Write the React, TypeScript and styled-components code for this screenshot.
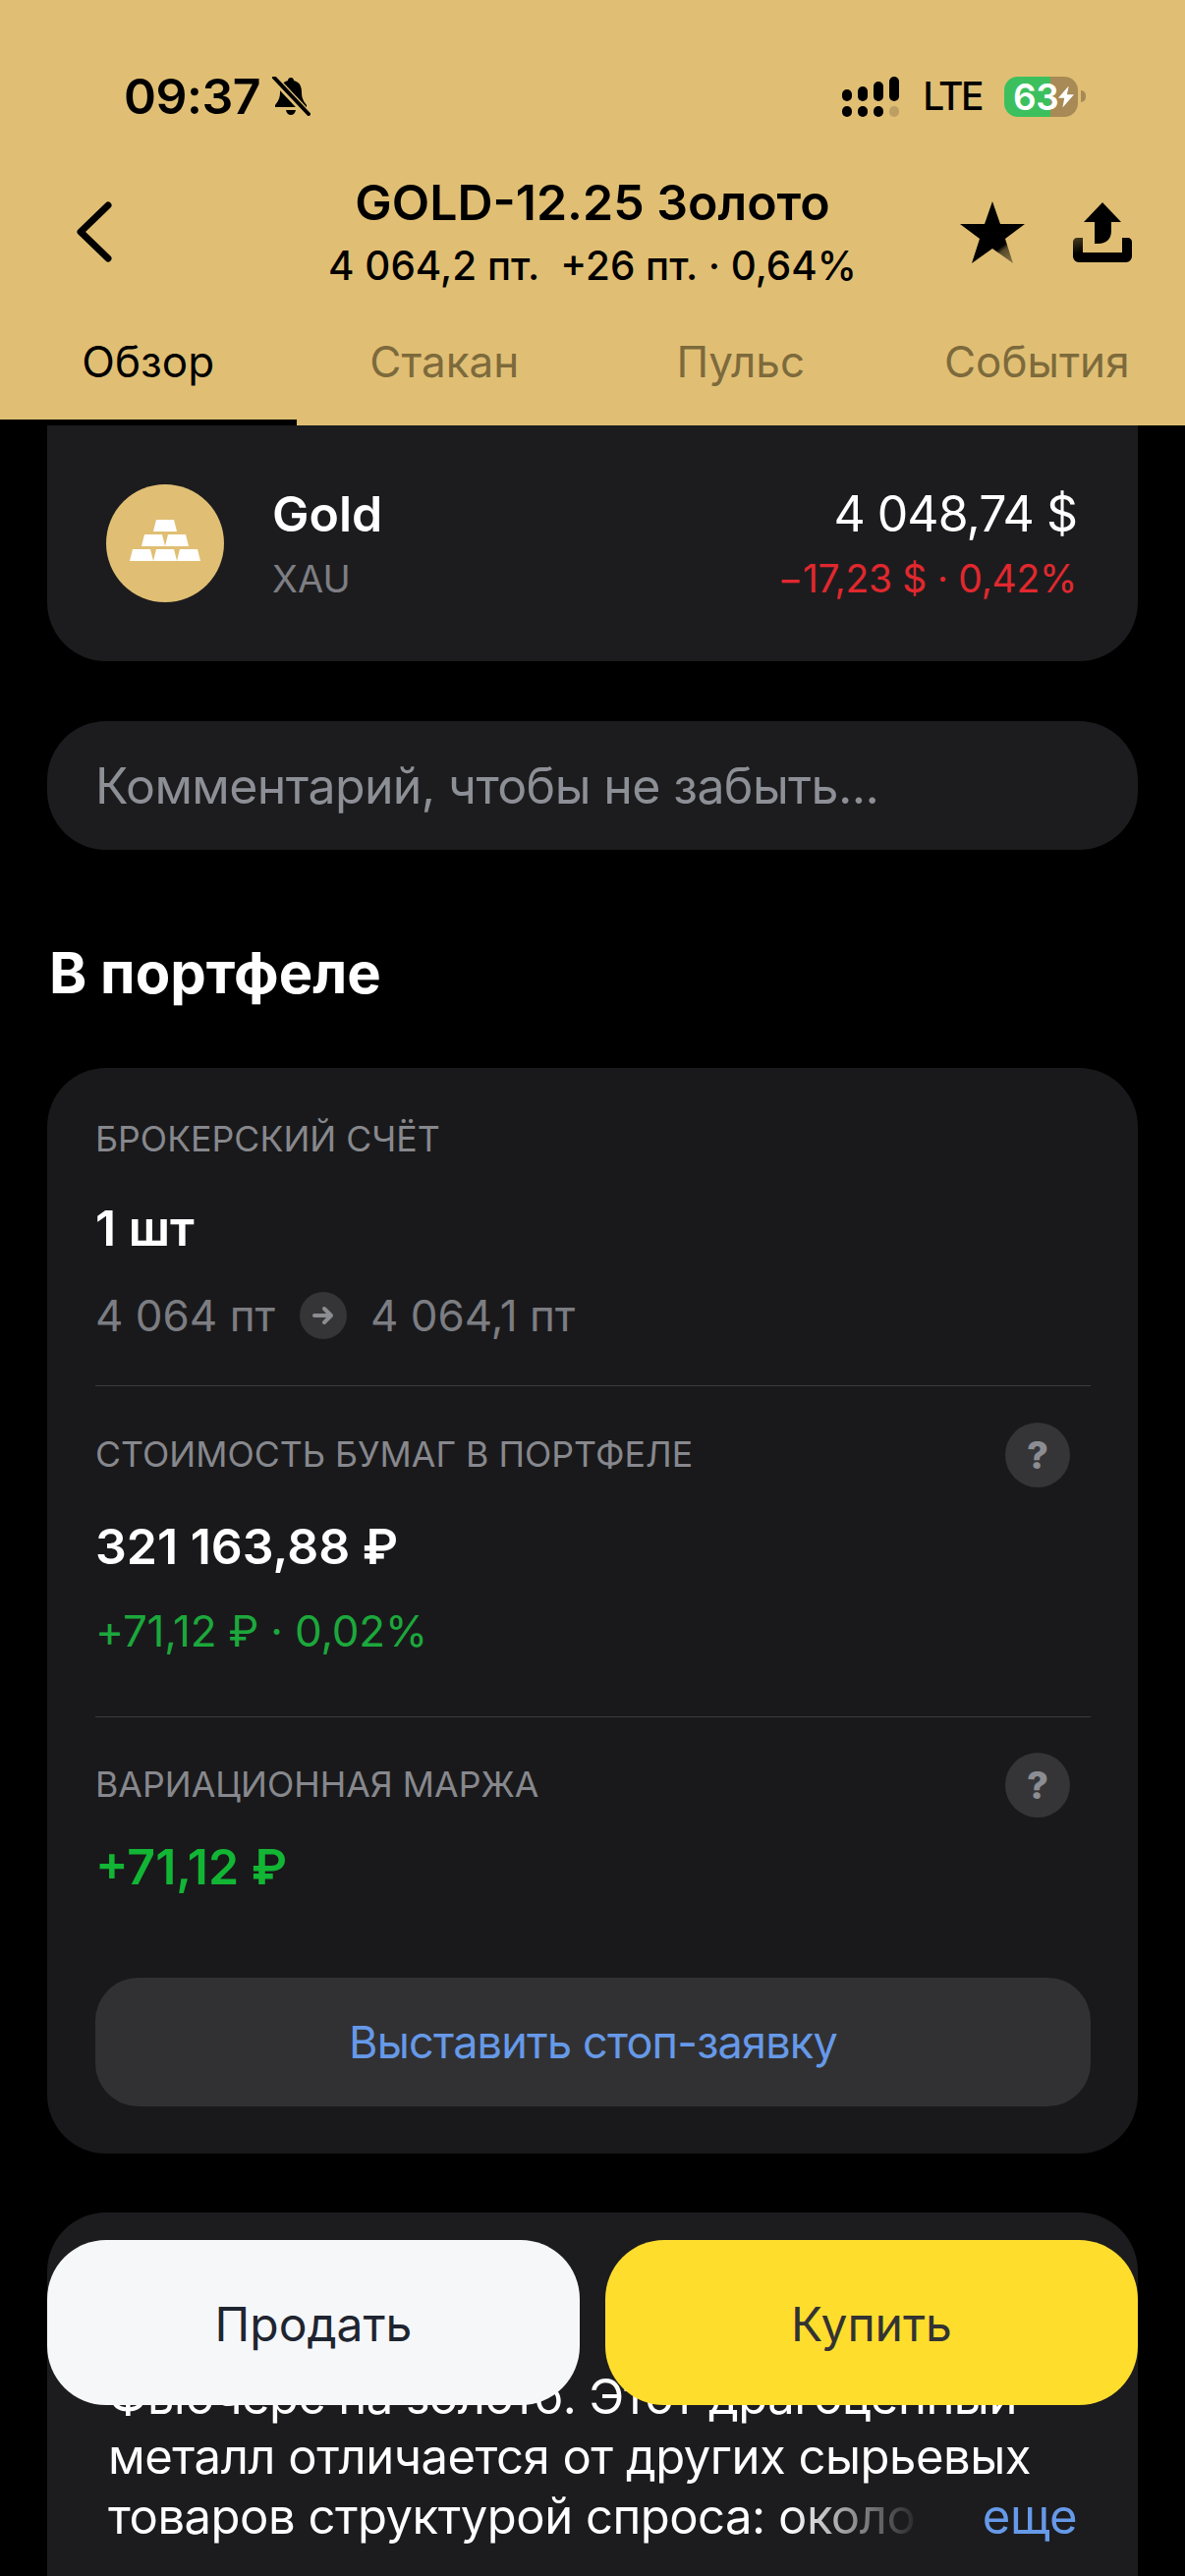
import styled, { createGlobalStyle } from 'styled-components'

const GlobalStyle = createGlobalStyle`
  html, body {
    margin: 0;
    padding: 0;
    background: #000;
  }
  * {
    box-sizing: border-box;
  }
`

const Screen = styled.div`
  position: relative;
  width: 1206px;
  height: 2622px;
  overflow: hidden;
  background: #000;
  font-family: Inter, 'Liberation Sans', sans-serif;
  color: #fff;
`

const Header = styled.header`
  height: 433px;
  padding-top: 70px;
  background: #e0bf74;
  color: #000;
`

const StatusBar = styled.div`
  height: 56px;
  padding: 0 101px 0 126px;
  display: flex;
  align-items: center;
`

const Time = styled.span`
  font-size: 50px;
  font-weight: 600;
  line-height: 56px;
  letter-spacing: -0.5px;
`

const StatusRight = styled.div`
  margin-left: auto;
  display: flex;
  align-items: center;
`

const Lte = styled.span`
  margin-left: 24px;
  font-size: 39px;
  font-weight: 500;
  line-height: 56px;
  letter-spacing: -2.5px;
`

const Battery = styled.div`
  margin-left: 23px;
  width: 75px;
  height: 41px;
  border-radius: 14px;
  background: linear-gradient(90deg, #3cc05e 0 47px, #a78a55 47px);
  display: flex;
  align-items: center;
  padding-left: 9px;
  color: #fff;
  font-size: 37px;
  font-weight: 600;
  letter-spacing: -0.5px;
`

const BatteryNub = styled.div`
  width: 5px;
  height: 12px;
  margin-left: 3px;
  border-radius: 0 6px 6px 0;
  background: #a78a55;
`

const NavRow = styled.div`
  height: 120px;
  margin-top: 50px;
  padding: 0 54px;
  display: grid;
  grid-template-columns: 1fr auto 1fr;
  align-items: center;
`

const BackSvg = styled.svg`
  margin-left: 23px;
`

const TitleBlock = styled.div`
  text-align: center;
`

const Title = styled.div`
  font-size: 50px;
  font-weight: 600;
  line-height: 60px;
`

const Subtitle = styled.div`
  margin-top: 10px;
  font-size: 40.4px;
  font-weight: 500;
  line-height: 50px;
  white-space: pre;
`

const NavActions = styled.div`
  justify-self: end;
  display: flex;
  align-items: center;
  gap: 49px;
`

const Tabs = styled.nav`
  display: grid;
  grid-template-columns: repeat(4, 1fr);
  height: 137px;
`

const Tab = styled.div<{ $active?: boolean }>`
  padding-top: 42px;
  text-align: center;
  font-size: 44px;
  line-height: 60px;
  color: ${({ $active }) => ($active ? '#000' : '#7d6a3c')};
  border-bottom: 6px solid ${({ $active }) => ($active ? '#000' : 'transparent')};
`

const Content = styled.main`
  padding: 0 48px;
`

const QuoteCard = styled.section`
  height: 240px;
  padding: 60px 62px 0 60px;
  background: #1c1c1e;
  border-radius: 0 0 60px 60px;
  display: flex;
`

const Avatar = styled.div`
  width: 120px;
  height: 120px;
  padding-bottom: 6px;
  border-radius: 50%;
  background: #e0bf74;
  display: flex;
  align-items: center;
  justify-content: center;
`

const QuoteNames = styled.div`
  margin-left: 49px;
`

const QuotePrices = styled.div`
  margin-left: auto;
  text-align: right;
`

const QuoteTop = styled.div<{ $bold?: boolean }>`
  font-size: 50px;
  font-weight: ${({ $bold }) => ($bold ? 600 : 400)};
  letter-spacing: ${({ $bold }) => ($bold ? 0 : -1)}px;
  line-height: 60px;
`

const QuoteBottom = styled.div<{ $red?: boolean }>`
  margin-top: 6px;
  font-size: ${({ $red }) => ($red ? 39 : 38)}px;
  letter-spacing: ${({ $red }) => ($red ? -0.3 : 0)}px;
  line-height: 60px;
  color: ${({ $red }) => ($red ? '#e1282e' : '#7d7e83')};
`

const CommentBox = styled.div`
  height: 131px;
  margin-top: 61px;
  padding-left: 49px;
  display: flex;
  align-items: center;
  border-radius: 60px;
  background: #1c1c1e;
  font-size: 50px;
  letter-spacing: -0.6px;
  color: #8d8f96;
`

const SectionTitle = styled.h2`
  margin: 90px 0 62px 2px;
  font-size: 58px;
  font-weight: 700;
  line-height: 70px;
`

const PortfolioCard = styled.section`
  height: 1105px;
  padding: 52px 48px 0 49px;
  background: #19191b;
  border-radius: 60px;
`

const Label = styled.div`
  font-size: 35.7px;
  line-height: 40px;
  color: #87888d;
`

const LabelRow = styled.div<{ $top: number }>`
  margin-top: ${({ $top }) => $top}px;
  height: 66px;
  padding-right: 21px;
  display: flex;
  align-items: center;
  justify-content: space-between;
`

const RowLabel = styled(Label)`
  margin-bottom: 3px;
`

const HelpBadge = styled.div`
  width: 66px;
  height: 66px;
  border-radius: 50%;
  background: #353538;
  display: flex;
  align-items: center;
  justify-content: center;
  font-size: 38px;
  font-weight: 800;
  color: #8c8d93;
`

const Amount = styled.div<{ $top: number; $green?: boolean }>`
  margin-top: ${({ $top }) => $top}px;
  font-size: 50px;
  font-weight: 600;
  line-height: 60px;
  color: ${({ $green }) => ($green ? '#12b534' : '#fff')};
`

const PriceRow = styled.div`
  margin-top: 35px;
  height: 48px;
  display: flex;
  align-items: center;
  font-size: 44px;
  color: #7c7d82;
`

const ArrowBadge = styled.div`
  width: 48px;
  height: 48px;
  margin: 0 24px 0 25px;
  border-radius: 50%;
  background: #353538;
  display: flex;
  align-items: center;
  justify-content: center;
`

const Divider = styled.div<{ $top: number }>`
  height: 1px;
  margin-top: ${({ $top }) => $top}px;
  background: #3c3c3f;
`

const Change = styled.div`
  margin-top: 31px;
  font-size: 44px;
  letter-spacing: -0.2px;
  line-height: 50px;
  color: #1ca83c;
`

const StopButton = styled.div`
  height: 131px;
  margin-top: 83px;
  border-radius: 44px;
  background: #313133;
  display: flex;
  align-items: center;
  justify-content: center;
  font-size: 45px;
  letter-spacing: -0.8px;
  color: #6699e8;
`

const AboutCard = styled.section`
  height: 500px;
  margin-top: 60px;
  padding: 157px 62px 0 62px;
  background: #1c1c1e;
  border-radius: 60px 60px 0 0;
  font-size: 49px;
  letter-spacing: -0.5px;
  line-height: 61px;
`

const AboutLine = styled.div`
  display: flex;
  white-space: pre;
`

const Fade = styled.span`
  background: linear-gradient(90deg, #fff 0, #fff 10px, #2a2a2c 100%);
  -webkit-background-clip: text;
  background-clip: text;
  color: transparent;
`

const More = styled.span`
  margin-left: auto;
  color: #6699e8;
`

const TradeBar = styled.div`
  position: absolute;
  left: 48px;
  right: 48px;
  top: 2280px;
  display: grid;
  grid-template-columns: 1fr 1fr;
  gap: 26px;
`

const TradeButton = styled.div<{ $buy?: boolean }>`
  height: 168px;
  padding-top: 2px;
  border-radius: 60px;
  background: ${({ $buy }) => ($buy ? '#ffdd2d' : '#f6f7f9')};
  color: ${({ $buy }) => ($buy ? '#333' : '#1f2530')};
  display: flex;
  align-items: center;
  justify-content: center;
  font-size: 48px;
`

const BellSvg = styled.svg`
  margin-left: 10px;
`

const BoltSvg = styled.svg`
  flex: none;
`

function BellOff() {
  return (
    <BellSvg width="42" height="40" viewBox="0 0 42 40">
      <path d="M21 1c2 0 3 1.400 3 3 6 1.500 8 6 8 12 0 6 2 9 5 13v2H5v-2c3-4 5-7 5-13 0-6 2-10.500 8-12 0-1.600 1-3 3-3z" fill="#000" />
      <path d="M16 34h10c-.5 3-2.500 5-5 5s-4.500-2-5-5z" fill="#000" />
      <path d="M5 3l33 35" stroke="#e0bf74" strokeWidth="8" />
      <path d="M4 1l35 37" stroke="#000" strokeWidth="4" strokeLinecap="round" />
    </BellSvg>
  )
}

function SignalBars() {
  const columns = [
    { x: 0, y: 13, h: 12 },
    { x: 16, y: 10, h: 15 },
    { x: 32, y: 5, h: 20 },
    { x: 48, y: 0, h: 25 },
  ]
  return (
    <svg width="58" height="41" viewBox="0 0 58 41">
      {columns.map(c => (
        <g key={c.x}>
          <rect x={c.x} y={c.y} width="10" height={c.h} rx="5" fill="#000" />
          <rect x={c.x} y="30" width="10" height="11" rx="5" fill={c.x === 48 ? '#bd9f63' : '#000'} />
        </g>
      ))}
    </svg>
  )
}

function BackIcon() {
  return (
    <BackSvg width="37" height="62" viewBox="0 0 37 62">
      <path d="M33 4L5 31l28 27" fill="none" stroke="#000" strokeWidth="7" strokeLinecap="round" strokeLinejoin="round" />
    </BackSvg>
  )
}

function StarIcon() {
  return (
    <svg width="66" height="63" viewBox="0 0 66 63">
      <defs>
        <linearGradient id="starFade" x1="0.5" y1="0.62" x2="0.8" y2="1">
          <stop offset="0.35" stopColor="#000" />
          <stop offset="0.5" stopColor="#574a2c" />
          <stop offset="1" stopColor="#8a7444" />
        </linearGradient>
      </defs>
      <path d="M33 0l8 23h25L46 38l8 25-21-15-21 15 8-25L0 23h25z" fill="url(#starFade)" />
    </svg>
  )
}

function ShareIcon() {
  return (
    <svg width="60" height="61" viewBox="0 0 60 61">
      <defs>
        <linearGradient id="trayFade" x1="0" y1="0" x2="0.6" y2="1">
          <stop offset="0" stopColor="#4a3d1f" />
          <stop offset="0.5" stopColor="#000" />
        </linearGradient>
      </defs>
      <path d="M30 0l19 20H39v9c0 8-5 13-13 13h-4V20H11z" fill="#000" />
      <path d="M0 40c0-2 2-4 4-4h6v15h40V36h6c2 0 4 2 4 4v15c0 3-3 6-6 6H6c-3 0-6-3-6-6z" fill="url(#trayFade)" />
    </svg>
  )
}

function GoldBarsIcon() {
  const bars = [
    [24, 0],
    [12, 15],
    [36, 15],
    [0, 30],
    [24, 30],
    [48, 30],
  ]
  return (
    <svg width="72" height="42" viewBox="0 0 72 42">
      {bars.map(([x, y]) => (
        <path key={`${x}-${y}`} d={`M${x + 3} ${y}h18l3 12H${x}z`} fill="#fff" />
      ))}
    </svg>
  )
}

function ArrowIcon() {
  return (
    <svg width="24" height="22" viewBox="0 0 24 22">
      <path d="M3 11h17M13 4l7 7-7 7" fill="none" stroke="#8c8d93" strokeWidth="4" strokeLinecap="round" strokeLinejoin="round" />
    </svg>
  )
}

function BoltIcon() {
  return (
    <BoltSvg width="16" height="25" viewBox="0 0 18 25">
      <path d="M12 0L0 14h7l-2 11 13-15h-8z" fill="#fff" />
    </BoltSvg>
  )
}

export default function App() {
  return (
    <Screen>
      <GlobalStyle />
      <Header>
        <StatusBar>
          <Time>09:37</Time>
          <BellOff />
          <StatusRight>
            <SignalBars />
            <Lte>LTE</Lte>
            <Battery>
              63
              <BoltIcon />
            </Battery>
            <BatteryNub />
          </StatusRight>
        </StatusBar>
        <NavRow>
          <BackIcon />
          <TitleBlock>
            <Title>GOLD-12.25 Золото</Title>
            <Subtitle>4 064,2 пт.  +26 пт. · 0,64%</Subtitle>
          </TitleBlock>
          <NavActions>
            <StarIcon />
            <ShareIcon />
          </NavActions>
        </NavRow>
        <Tabs>
          <Tab $active>Обзор</Tab>
          <Tab>Стакан</Tab>
          <Tab>Пульс</Tab>
          <Tab>События</Tab>
        </Tabs>
      </Header>

      <Content>
        <QuoteCard>
          <Avatar>
            <GoldBarsIcon />
          </Avatar>
          <QuoteNames>
            <QuoteTop $bold>Gold</QuoteTop>
            <QuoteBottom>XAU</QuoteBottom>
          </QuoteNames>
          <QuotePrices>
            <QuoteTop>4 048,74 $</QuoteTop>
            <QuoteBottom $red>−17,23 $ · 0,42%</QuoteBottom>
          </QuotePrices>
        </QuoteCard>

        <CommentBox>Комментарий, чтобы не забыть...</CommentBox>

        <SectionTitle>В портфеле</SectionTitle>

        <PortfolioCard>
          <Label>БРОКЕРСКИЙ СЧЁТ</Label>
          <Amount $top={41}>1 шт</Amount>
          <PriceRow>
            4 064 пт
            <ArrowBadge>
              <ArrowIcon />
            </ArrowBadge>
            4 064,1 пт
          </PriceRow>
          <Divider $top={47} />

          <LabelRow $top={37}>
            <RowLabel>СТОИМОСТЬ БУМАГ В ПОРТФЕЛЕ</RowLabel>
            <HelpBadge>?</HelpBadge>
          </LabelRow>
          <Amount $top={30}>321 163,88 ₽</Amount>
          <Change>+71,12 ₽ · 0,02%</Change>
          <Divider $top={62} />

          <LabelRow $top={36}>
            <RowLabel>ВАРИАЦИОННАЯ МАРЖА</RowLabel>
            <HelpBadge>?</HelpBadge>
          </LabelRow>
          <Amount $top={20} $green>
            +71,12 ₽
          </Amount>

          <StopButton>Выставить стоп-заявку</StopButton>
        </PortfolioCard>

        <AboutCard>
          <AboutLine>Фьючерс на золото. Этот драгоценный</AboutLine>
          <AboutLine>металл отличается от других сырьевых</AboutLine>
          <AboutLine>
            товаров структурой спроса: <Fade>около</Fade>
            <More>еще</More>
          </AboutLine>
        </AboutCard>
      </Content>

      <TradeBar>
        <TradeButton>Продать</TradeButton>
        <TradeButton $buy>Купить</TradeButton>
      </TradeBar>
    </Screen>
  )
}
